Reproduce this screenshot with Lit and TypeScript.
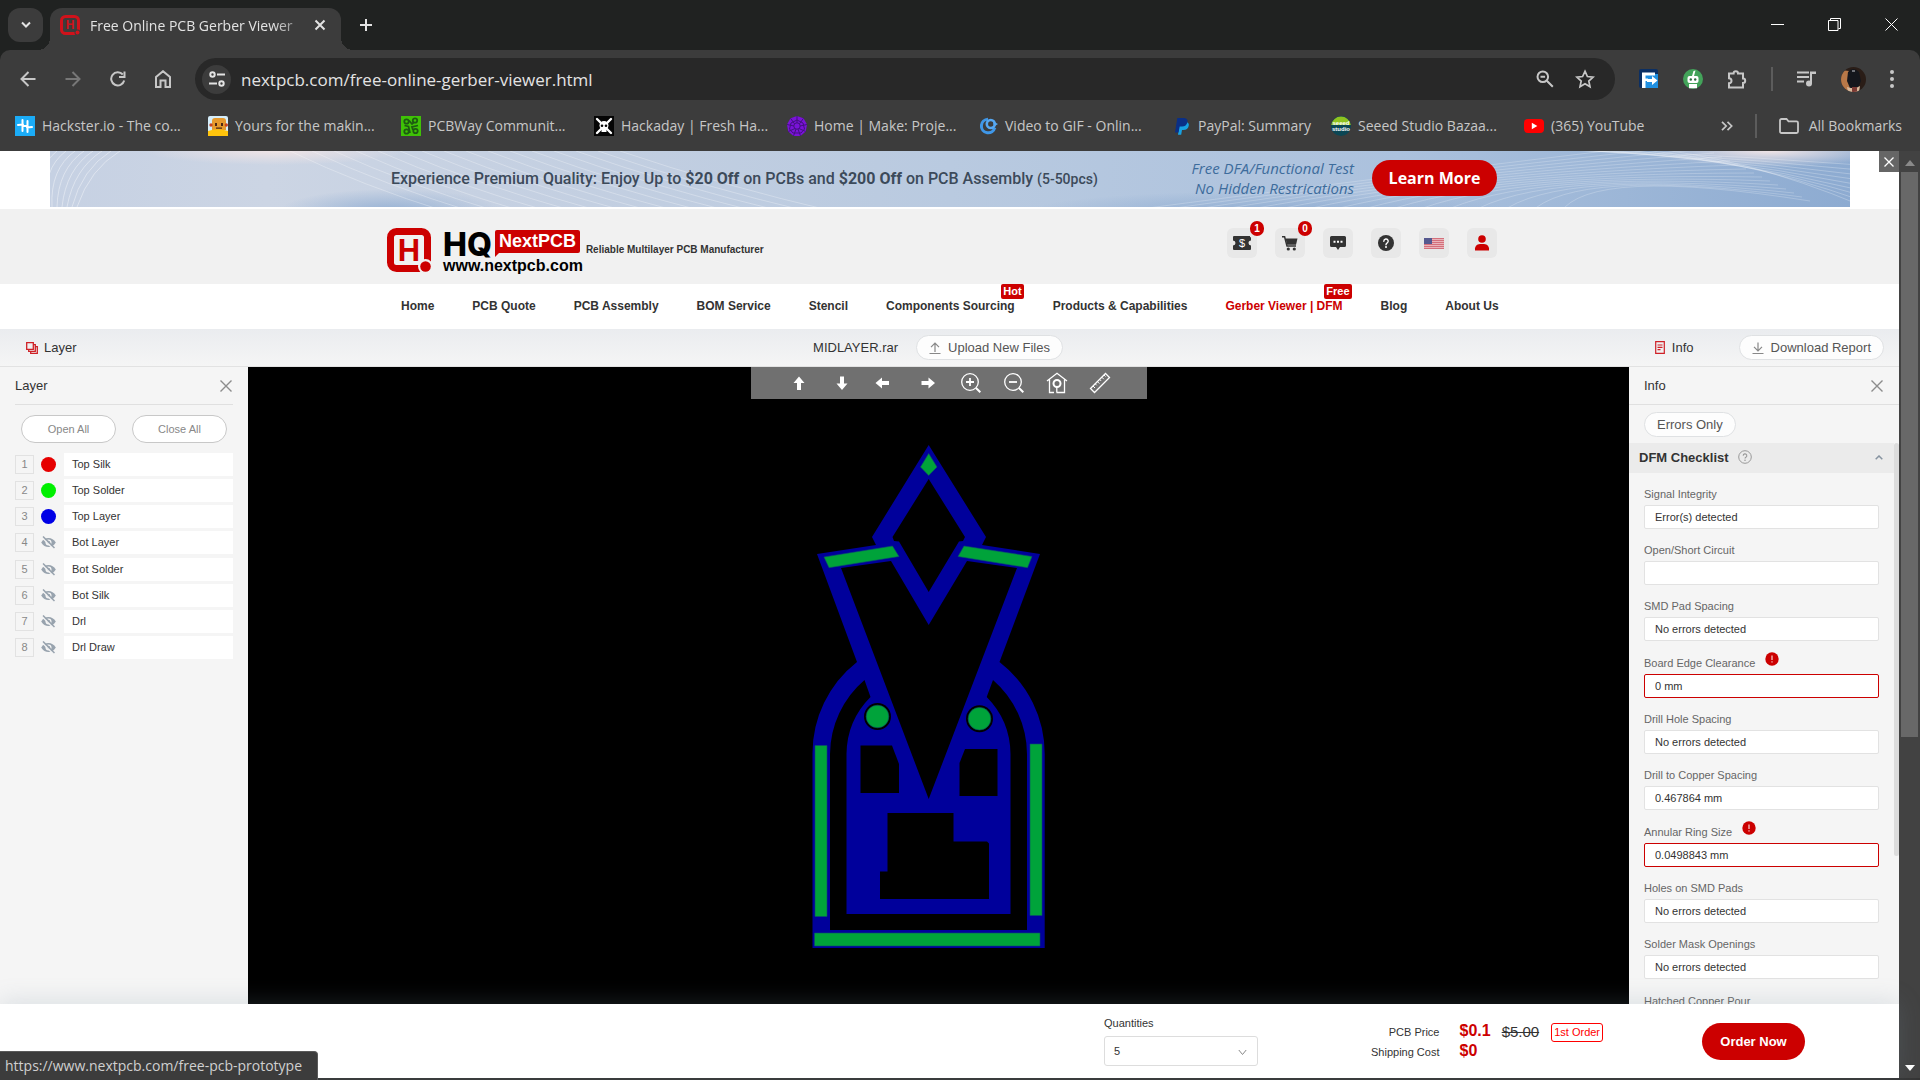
import { LitElement, html, css, svg, nothing, TemplateResult, SVGTemplateResult } from "lit";
import { customElement, state } from "lit/decorators.js";
import { classMap } from "lit/directives/class-map.js";
import { styleMap } from "lit/directives/style-map.js";

const icon = (w: number, h: number, vb: string, body: SVGTemplateResult): TemplateResult =>
  html`<svg class="icon" width=${w} height=${h} viewBox=${vb} aria-hidden="true">${body}</svg>`;

const line = (d: string, w = 2, color = "currentColor") =>
  svg`<path d=${d} fill="none" stroke=${color} stroke-width=${w} stroke-linecap="round" stroke-linejoin="round"></path>`;
const flat = (d: string, w = 2, color = "currentColor") =>
  svg`<path d=${d} fill="none" stroke=${color} stroke-width=${w}></path>`;
const fill = (d: string, color = "currentColor") => svg`<path d=${d} fill=${color}></path>`;

/* ---------- browser icons ---------- */
const icons = {
  chevron: icon(12, 8, "0 0 12 8", flat("M2 1.5 6 5.5 10 1.5", 2)),
  close: icon(12, 12, "0 0 12 12", flat("M1.5 1.5l9 9M10.500 1.500l-9 9", 2)),
  plus: icon(14, 14, "0 0 14 14", flat("M7 1v12M1 7h12", 2)),
  min: icon(13, 13, "0 0 13 13", fill("M0 6h13v1H0z")),
  max: icon(13, 13, "0 0 13 13", flat("M.5 2.500h9.500v10H.5zM2.500 2.500V.5h10v10h-2", 1)),
  winClose: icon(13, 13, "0 0 13 13", flat("M.5.5l12 12M12.500.5l-12 12", 1)),
  back: icon(16, 16, "0 0 16 16", flat("M15.500 8H1.500M8.500 1 1.500 8l7 7", 2)),
  fwd: icon(16, 16, "0 0 16 16", flat("M.5 8h14M7.500 1l7 7-7 7", 2)),
  reload: icon(16, 16, "0 0 16 16", svg`${flat("M14.200 9.500A6.600 6.600 0 1 1 12.800 3.500", 2)}${fill("M15.500.5v6.500H9V5h4.500V.5z")}`),
  home: icon(16, 18, "0 0 16 18", flat("M1 7 8 1.200 15 7v10h-4.500v-6.500h-5V17H1z", 2)),
  tune: icon(16, 16, "0 0 16 16", svg`${flat("M8 3.500h8M0 12.500h8", 2)}<circle cx="3.500" cy="3.500" r="2.200" fill="none" stroke="currentColor" stroke-width="2"></circle><circle cx="12.500" cy="12.500" r="2.200" fill="none" stroke="currentColor" stroke-width="2"></circle>`),
  zoom: icon(18, 18, "0 0 18 18", svg`<circle cx="6.800" cy="6.800" r="5.300" fill="none" stroke="currentColor" stroke-width="2"></circle>${flat("M10.800 10.800l6 6M4.500 6.800h4.600", 2)}`),
  star: icon(20, 20, "0 0 20 20", flat("M10 2.200l2.400 5.300 5.700.6-4.300 3.900 1.200 5.700-5-2.900-5 2.900 1.200-5.700L1.900 8.100l5.700-.6z", 1.7)),
  ext1: icon(20, 20, "0 0 20 20", svg`<rect width="19" height="19" rx="2" fill="#0b2f63"></rect><path d="M5 5h14v14H5z" fill="#1f8fe0"></path><path d="M3 3.500h13v3H6.500v3H9V12H6.500v7H3z" fill="#fff"></path><path d="M8 10h5V7l5.500 4.500L13 16v-3H8z" fill="#fff"></path>`),
  ext2: icon(20, 20, "0 0 20 20", svg`<circle cx="10" cy="10" r="10" fill="#43a35a"></circle><rect x="4.500" y="7" width="11" height="7" rx="2" fill="#fff"></rect><path d="M6 15h8v4.200H6zM9 7l1.500-5 2-.6L11 7z" fill="#fff"></path><circle cx="7.800" cy="10.500" r="1.200" fill="#2d6b40"></circle><circle cx="12.200" cy="10.500" r="1.200" fill="#2d6b40"></circle>`),
  puzzle: icon(20, 20, "0 0 20 20", svg`<path d="M2 4.500h4.600a2.200 2.200 0 1 1 4.400 0h5v5a2.200 2.200 0 1 1 0 4.400V18.500H2v-4.300a2.500 2.500 0 0 0 0-5z" fill="none" stroke="currentColor" stroke-width="2"></path>`),
  music: icon(20, 18, "0 0 20 18", svg`${flat("M0 2.500h12M0 7h12M0 11.500h7", 2)}<circle cx="12" cy="13.500" r="3" fill="currentColor"></circle>${fill("M13 1.500h6v2.500h-4v9.500h-2z")}`),
  dots: icon(4, 18, "0 0 4 18", svg`<circle cx="2" cy="2" r="2" fill="currentColor"></circle><circle cx="2" cy="9" r="2" fill="currentColor"></circle><circle cx="2" cy="16" r="2" fill="currentColor"></circle>`),
  more: icon(12, 10, "0 0 12 10", flat("M1 .8 5.200 5 1 9.200M6.500.8 10.700 5 6.500 9.200", 1.7)),
  folder: icon(20, 16, "0 0 20 16", svg`<path d="M1 2.500A1.500 1.500 0 0 1 2.500 1h5l2 2.300h8A1.500 1.500 0 0 1 19 4.800v8.700a1.500 1.500 0 0 1-1.500 1.500h-15A1.500 1.500 0 0 1 1 13.500z" fill="none" stroke="currentColor" stroke-width="1.800"></path>`),
  avatar: icon(25, 25, "0 0 25 25", svg`<defs><clipPath id="av"><circle cx="12.500" cy="12.500" r="12.500"></circle></clipPath></defs><g clip-path="url(#av)"><rect width="25" height="25" fill="#2a1d17"></rect><path d="M0 3l8 1 1 16-3 5H0z" fill="#b87848"></path><path d="M7 5q5-6 11 0l2 9-3 7H9l-3-7z" fill="#14161c"></path><path d="M6 20l4 1h5l4-2-1 6H7z" fill="#d9b99c"></path><path d="M11 20h5v5h-5z" fill="#7a3a34"></path><path d="M11 3h3v2h-3z" fill="#6f7178"></path></g>`),
};

/* ---------- bookmark favicons ---------- */
const fav = {
  hackster: icon(20, 20, "0 0 20 20", svg`<rect width="20" height="20" fill="#1bacf7"></rect>${line("M7.500 4v11M12.500 5v11M3 9l5-.4M12 11.500l5-.5M8 10h4.500", 2, "#fff")}`),
  yours: icon(20, 20, "0 0 20 20", svg`<rect width="20" height="20" rx="2" fill="#d5eefb"></rect><path d="M4 5q0-3 3-3h8q3 0 3 3v9H4z" fill="#e69a2e"></path><path d="M0 15q10-3.500 20 0v5H0z" fill="#ffc40c"></path><path d="M7 7h2v3H7zm6 0h2v3h-2zM8 11.500h6v1.200H8z" fill="#4c2814"></path><circle cx="3" cy="9" r="1.700" fill="#c74424"></circle><circle cx="18.300" cy="9" r="1.700" fill="#c74424"></circle>`),
  pcbway: icon(20, 20, "0 0 20 20", svg`<rect width="20" height="20" fill="#3fc206"></rect><g fill="none" stroke="#1d5a12" stroke-width="1.800"><circle cx="5.500" cy="5.500" r="2.200"></circle><circle cx="14" cy="4.500" r="2.200"></circle><circle cx="5.500" cy="15.500" r="2.200"></circle><circle cx="14.500" cy="15" r="2.200"></circle><path d="M8 4.500 11 8l1.500-1.500M3.500 9.500l4 1L9 17M12 14l-1-3 6-1.500"></path></g>`),
  hackaday: icon(20, 20, "0 0 20 20", svg`<rect width="20" height="20" fill="#050505"></rect>${line("M3 3l14 14M17 3 3 17", 2.4, "#fff")}<circle cx="10" cy="9.500" r="4.500" fill="#fff"></circle><path d="M7.500 12.500h5v3.500h-5z" fill="#fff"></path><circle cx="8" cy="9.800" r="1.300" fill="#050505"></circle><circle cx="12" cy="9.800" r="1.300" fill="#050505"></circle>`),
  make: icon(20, 20, "0 0 20 20", svg`<path d="M10 0l6.500 2.300L20 8.500l-1.300 7L13.500 20h-7L1.300 15.500 0 8.500l3.500-6.200z" fill="#7a12d8"></path><g fill="none" stroke="#431080" stroke-width="1"><circle cx="10" cy="10" r="3.200"></circle><path d="M10 0v6.800M3.500 2.300l4 5.500M16.500 2.300l-4 5.500M0 8.500l7 1.500M20 8.500 13 10M1.300 15.500 8 12.500M18.700 15.500 12 12.500M6.500 20l2.500-7M13.500 20 11 13M4 7l6-3 6 3 1.500 6-3.500 4H6l-3.500-4z"></path></g>`),
  gif: icon(18, 18, "0 0 18 18", svg`<path d="M8 2.200a6.800 6.800 0 1 0 6.800 8.500" fill="none" stroke="#3f97e8" stroke-width="3"></path><circle cx="10.800" cy="7" r="4" fill="none" stroke="#56a8f2" stroke-width="2.600"></circle><path d="M13 4.500 18 7l-4 2.500z" fill="#56a8f2"></path>`),
  paypal: icon(18, 18, "0 0 18 18", svg`<path d="M6.500 5h6.800q3.200.8 2.400 4-.9 4-5.200 4H9l-.8 4.800H5z" fill="#17a1e2"></path><path d="M4.300 1h6.900q4 .4 3.200 4.200-.9 4.200-5.400 4.200H6.700L5.500 15.500H2z" fill="#0a2f86"></path>`),
  seeed: icon(20, 20, "0 0 20 20", svg`<circle cx="10" cy="10" r="10" fill="#0b4654"></circle><path d="M.2 9a9.900 9.900 0 0 1 19.600 0z" fill="#8fc31f"></path><text x="10" y="9" font-size="6" font-weight="700" fill="#fff" text-anchor="middle" font-family="Liberation Sans, sans-serif">seeed</text><text x="10" y="14.500" font-size="6" font-weight="700" fill="#fff" text-anchor="middle" font-family="Liberation Sans, sans-serif">studio</text>`),
  youtube: icon(20, 18, "0 0 20 18", svg`<rect y="2" width="20" height="14" rx="4" fill="#f00"></rect><path d="M7.800 5.800v6.400L13.300 9z" fill="#fff"></path>`),
};

/* ---------- site icons ---------- */
const site = {
  coupon: icon(18, 14, "0 0 18 14", svg`<path d="M1 0h16v1q1 0 1 1v2.500a2.500 2.500 0 0 0 0 5V13q0 1-1 1H1q-1 0-1-1V9.500a2.500 2.500 0 0 0 0-5V1q0-1 1-1z" fill="#333"></path><text x="9" y="11" font-size="11" fill="#fff" text-anchor="middle" font-family="Liberation Sans, sans-serif">$</text>`),
  cart: icon(16, 15, "0 0 16 15", svg`<path d="M3.500 2.500H15.500L14 8.800H5.200z" fill="#333"></path>${flat("M0 .8h2.600L5 10h9", 1.5, "#333")}<circle cx="6.300" cy="13" r="1.600" fill="#333"></circle><circle cx="12.300" cy="13" r="1.600" fill="#333"></circle>`),
  chat: icon(16, 14, "0 0 16 14", svg`<path d="M1.500 0h13Q16 0 16 1.500v8q0 1.500-1.500 1.500H10l-2 3-2-3H1.500Q0 11 0 9.500v-8Q0 0 1.500 0z" fill="#333"></path><path d="M3.500 4.700h2v2h-2zm3.500 0h2v2H7zm3.500 0h2v2h-2z" fill="#fff"></path>`),
  help: icon(16, 16, "0 0 16 16", svg`<circle cx="8" cy="8" r="8" fill="#333"></circle>${line("M5.800 6.200a2.200 2.200 0 1 1 3.200 2q-1 .6-1 1.500", 1.4, "#fff")}<circle cx="8" cy="12" r="1" fill="#fff"></circle>`),
  flag: icon(20, 11, "0 0 20 11", svg`<rect width="20" height="11" fill="#eab4ba"></rect>${[0, 2, 4, 6, 8, 10].map((y) => svg`<rect y=${y} width="20" height="1" fill="#d4707b"></rect>`)}<rect width="8" height="6" fill="#56598f"></rect>`),
  user: icon(16, 16, "0 0 16 16", svg`<circle cx="8" cy="4" r="3.800" fill="#c00"></circle><path d="M1 15.500q-.5-6.500 5-6.500h4q5.500 0 5 6.500z" fill="#c00"></path>`),
  layers: icon(12, 12, "0 0 12 12", svg`${flat("M.7.7h6.600v6.600H.7zM2.700 7.300v2h6.600V2.700h-2M4.700 9.300v2h6.600V4.700h-2", 1.3, "#cf2026")}`),
  doc: icon(10, 13, "0 0 10 13", svg`${flat("M.7.7h8.600v11.600H.7zM2.500 4h5M2.500 6.300h5M2.500 8.600h3", 1.2, "#cf2026")}`),
  upload: icon(12, 12, "0 0 12 12", flat("M6 10V1.500M2 5.200 6 1.200l4 4M.5 11.500h11", 1.2, "#888")),
  download: icon(12, 12, "0 0 12 12", flat("M6 .5V8.500M2 4.800l4 4 4-4M.5 11.500h11", 1.2, "#888")),
  cross: icon(12, 12, "0 0 12 12", flat("M.5.5l11 11M11.500.5l-11 11", 1.4, "#8c8c8c")),
  eyeOff: icon(15, 13, "0 0 15 13", svg`<path d="M.2 6.500Q3 2 7.500 2t7.300 4.500Q12 11 7.500 11T.2 6.500z" fill="#98a3ae"></path><circle cx="7.500" cy="6.500" r="3" fill="#f5f5f5"></circle><circle cx="7.500" cy="6.500" r="1.700" fill="#98a3ae"></circle>${flat("M1 1.500 12.500 13", 1.4, "#f5f5f5")}${flat("M2 .5 13.500 12", 1.5, "#98a3ae")}`),
  question: icon(14, 14, "0 0 14 14", svg`<circle cx="7" cy="7" r="6.300" fill="none" stroke="#999" stroke-width="1"></circle>${flat("M5.200 5.700a1.800 1.800 0 1 1 2.700 1.500q-.9.5-.9 1.300", 1.1, "#999")}<circle cx="7" cy="10.300" r=".8" fill="#999"></circle>`),
  up: icon(8, 5, "0 0 8 5", flat("M.7 4.300 4 1l3.300 3.300", 1.5, "#8693a0")),
  down: icon(9, 7, "0 0 9 7", flat("M.8 1l3.700 4.500L8.200 1", 1, "#888")),
  error: icon(14, 14, "0 0 14 14", svg`<circle cx="7" cy="7" r="6.700" fill="#c00"></circle><rect x="6.500" y="3.500" width="1" height="4.500" fill="#fff"></rect><rect x="6.500" y="9.300" width="1" height="1.200" fill="#fff"></rect>`),
};

/* ---------- viewer toolbar ---------- */
const tools: [string, TemplateResult][] = [
  ["Move up", icon(20, 20, "0 0 20 20", fill("M10 3.500l5.500 6.500H12v7H8v-7H4.500z"))],
  ["Move down", icon(20, 20, "0 0 20 20", fill("M10 17l5.500-6.500H12v-7H8v7H4.500z"))],
  ["Move left", icon(20, 20, "0 0 20 20", fill("M.5 10 7 4.500V8h7v4H7v3.500z"))],
  ["Move right", icon(20, 20, "0 0 20 20", fill("M17 10l-6.500-5.500V8h-7v4h7v3.500z"))],
  ["Zoom in", icon(20, 20, "0 0 20 20", svg`<circle cx="9" cy="9" r="8.300" fill="none" stroke="currentColor" stroke-width="1.300"></circle>${flat("M5 9h8M9 5v8", 1.800)}${flat("M15 15l4.300 4.300", 2)}`)],
  ["Zoom out", icon(20, 20, "0 0 20 20", svg`<circle cx="9" cy="9" r="8.300" fill="none" stroke="currentColor" stroke-width="1.300"></circle>${flat("M5 9h8", 1.800)}${flat("M15 15l4.300 4.300", 2)}`)],
  ["Reset view", icon(22, 22, "0 0 22 22", svg`${flat("M1 9 11 1.300 21 9M3.500 7.500v13H8M10.500 20.500H18.500V7.500M10.800 15v5.500", 1.300)}<circle cx="11" cy="11.500" r="3.500" fill="none" stroke="currentColor" stroke-width="2"></circle>`)],
  ["Measure", icon(22, 22, "0 0 22 22", svg`${flat("M1.500 16.500 16.500 1.500l4 4L5.500 20.500z", 1.300)}${flat("M4 14l2 2M6.200 11.800l1.500 1.500M8.400 9.600l2 2M10.600 7.400l1.500 1.500M12.800 5.200l2 2M15 3l1.500 1.500", 1)}`)],
];

const bookmarks: { name: string; pic: TemplateResult; short?: boolean }[] = [
  { name: "Hackster.io - The co...", pic: fav.hackster },
  { name: "Yours for the makin...", pic: fav.yours },
  { name: "PCBWay Communit...", pic: fav.pcbway },
  { name: "Hackaday | Fresh Ha...", pic: fav.hackaday },
  { name: "Home | Make: Proje...", pic: fav.make },
  { name: "Video to GIF - Onlin...", pic: fav.gif },
  { name: "PayPal: Summary", pic: fav.paypal, short: true },
  { name: "Seeed Studio Bazaa...", pic: fav.seeed },
  { name: "(365) YouTube", pic: fav.youtube },
];

const menu: { name: string; tag?: string; active?: boolean }[] = [
  { name: "Home" }, { name: "PCB Quote" }, { name: "PCB Assembly" }, { name: "BOM Service" }, { name: "Stencil" },
  { name: "Components Sourcing", tag: "Hot" }, { name: "Products & Capabilities" },
  { name: "Gerber Viewer | DFM", tag: "Free", active: true }, { name: "Blog" }, { name: "About Us" },
];

const actions: { name: string; pic: TemplateResult; count?: number }[] = [
  { name: "Coupons", pic: site.coupon, count: 1 },
  { name: "Cart", pic: site.cart, count: 0 },
  { name: "Messages", pic: site.chat },
  { name: "Help", pic: site.help },
  { name: "Country", pic: site.flag },
  { name: "Account", pic: site.user },
];

const layers: { name: string; color?: string }[] = [
  { name: "Top Silk", color: "#e60000" },
  { name: "Top Solder", color: "#00f000" },
  { name: "Top Layer", color: "#0000e6" },
  { name: "Bot Layer" }, { name: "Bot Solder" }, { name: "Bot Silk" }, { name: "Drl" }, { name: "Drl Draw" },
];

const checks: { name: string; value: string; bad?: boolean }[] = [
  { name: "Signal Integrity", value: "Error(s) detected" },
  { name: "Open/Short Circuit", value: "" },
  { name: "SMD Pad Spacing", value: "No errors detected" },
  { name: "Board Edge Clearance", value: "0 mm", bad: true },
  { name: "Drill Hole Spacing", value: "No errors detected" },
  { name: "Drill to Copper Spacing", value: "0.467864 mm" },
  { name: "Annular Ring Size", value: "0.0498843 mm", bad: true },
  { name: "Holes on SMD Pads", value: "No errors detected" },
  { name: "Solder Mask Openings", value: "No errors detected" },
  { name: "Hatched Copper Pour", value: "No errors detected" },
];

const range = (n: number) => Array.from({ length: n }, (_, i) => i);

/* Soft ribbons of thin lines behind the promotion text. */
const bannerArt = html`<svg class="art" viewBox="0 0 1800 56" preserveAspectRatio="none" aria-hidden="true">
  <defs>
    <linearGradient id="sky"><stop offset="0" stop-color="#c6d1e3"></stop><stop offset=".12" stop-color="#ccd5e4"></stop><stop offset=".3" stop-color="#c3cfe1"></stop><stop offset=".5" stop-color="#b9cae0"></stop><stop offset=".75" stop-color="#abc1dd"></stop><stop offset="1" stop-color="#8dabd1"></stop></linearGradient>
    <radialGradient id="glow"><stop offset="0" stop-color="#efe4e6"></stop><stop offset="1" stop-color="#efe4e6" stop-opacity="0"></stop></radialGradient>
    <radialGradient id="deep"><stop offset="0" stop-color="#8aa9d0" stop-opacity=".8"></stop><stop offset="1" stop-color="#8aa9d0" stop-opacity="0"></stop></radialGradient>
  </defs>
  <rect width="1800" height="56" fill="url(#sky)"></rect>
  <ellipse cx="225" cy="0" rx="130" ry="14" fill="url(#glow)"></ellipse>
  <ellipse cx="1720" cy="0" rx="120" ry="16" fill="url(#glow)"></ellipse>
  <ellipse cx="340" cy="60" rx="110" ry="22" fill="url(#deep)"></ellipse>
  <ellipse cx="1220" cy="60" rx="240" ry="20" fill="url(#deep)"></ellipse>
  <g fill="none" stroke="#fff" stroke-width="1">
    ${range(9).map((i) => svg`<path opacity=".4" d=${`M${70 - i * 9} 0Q${40 - i * 8} 18 ${27 - i * 5} 56`}></path>`)}
    ${range(16).map((i) => svg`<path opacity=".28" d=${`M${240 + i * 22} 0Q${310 + i * 24} 34 ${400 + i * 26} 62`}></path>`)}
    ${range(16).map((i) => svg`<path opacity=".22" d=${`M${1060 + i * 30} 62Q${1300 + i * 16} ${30 - i} ${1640 + i * 8} ${-10 + i * 4}`}></path>`)}
    ${range(9).map((i) => svg`<path opacity=".25" d=${`M${1380 + i * 26} -4Q${1600 + i * 12} ${-2 + i} 1810 ${14 + i * 5}`}></path>`)}
  </g>
</svg>`;

const board = html`<svg class="board" viewBox="248 367 1381 637" role="img" aria-label="Board preview">
  <g fill="#00009b">
    <path d="M928.700 445 986 537 982 545 1040 554 999.500 662A116 116 0 0 1 1044.700 754V948H812.500V754A116 116 0 0 1 857 662L817 554 876 545 872 537Z"></path>
  </g>
  <g fill="#000">
    <path d="M928.700 479 965 537 963 541 959 541.500 928.700 592 899 541.500 894 541 892.500 537Z"></path>
    <path d="M841 568 891 561 928.700 625 967 561 1017 568 928.700 799Z"></path>
    <path d="M864.500 680 870.500 697A82 82 0 0 0 846.500 754V914H1010.500V754A82 82 0 0 0 986.700 697L993 680A98.500 98.500 0 0 1 1027 754V930H830V754A98.500 98.500 0 0 1 864.500 680Z"></path>
    <path d="M860.500 745.500H892L899 764V793H860.500Z"></path>
    <path d="M965 749H997.500V796H959.500V763Z"></path>
    <path d="M887.500 813H953.500V841.500H987L989 843.500V899H880V871.500H887.500Z"></path>
    <circle cx="877.500" cy="716.500" r="13.500"></circle>
    <circle cx="979.500" cy="718.700" r="13.500"></circle>
  </g>
  <g fill="#00a33a" stroke="#0a4f6c" stroke-width=".6">
    <path d="M928.700 453.500 937 467 928.700 475.500 920.500 467Z"></path>
    <path d="M824 557 892.500 546 899 556.500 829 567.700Z"></path>
    <path d="M958 556.500 964 546 1032 556.500 1027.500 567.700Z"></path>
    <path d="M815 745.500H827V916.500H815Z"></path>
    <path d="M1030 744H1042V915.500H1030Z"></path>
    <path d="M814.500 933H1040V946H814.500Z"></path>
    <circle cx="877.500" cy="716.500" r="11.300"></circle>
    <circle cx="979.500" cy="718.700" r="11.300"></circle>
  </g>
</svg>`;

@customElement("app-root")
export class AppRoot extends LitElement {
  @state() private quantity = "5";

  static styles = css`
    :host { display: flex; flex-direction: column; height: 100vh; overflow: hidden; position: relative; font-family: "Liberation Sans", Arial, sans-serif; font-size: 13px; color: #333; background: #fff; }
    * { box-sizing: border-box; }
    button, input, select { font: inherit; color: inherit; margin: 0; }
    button { border: 0; background: none; padding: 0; cursor: pointer; display: inline-flex; align-items: center; justify-content: center; }
    a { color: inherit; text-decoration: none; }
    ul { list-style: none; margin: 0; padding: 0; }
    .icon { display: block; flex: none; }

    /* browser frame */
    .chrome { flex: none; background: #202221; color: #e3e3e3; font-family: "Open Sans", "Noto Sans", sans-serif; }
    .strip { display: flex; align-items: flex-end; height: 50px; padding-left: 8px; }
    .search-tabs { width: 35px; height: 34px; border-radius: 12px; background: #3c3c3c; margin-bottom: 8px; }
    .tab { position: relative; display: flex; align-items: center; width: 291px; height: 42px; margin-left: 7px; padding: 0 15px 8px 10px; border-radius: 12px 12px 0 0; background: #3c3c3c; }
    .tab::before, .tab::after { content: ""; position: absolute; bottom: 0; width: 12px; height: 12px; }
    .tab::before { right: 100%; background: radial-gradient(circle at 0 0, transparent 12px, #3c3c3c 12px); }
    .tab::after { left: 100%; background: radial-gradient(circle at 100% 0, transparent 12px, #3c3c3c 12px); }
    .tab-title { flex: 1; margin: 0 9px 0 10px; font-size: 14px; white-space: nowrap; -webkit-mask-image: linear-gradient(90deg, #000 85%, transparent 105%); mask-image: linear-gradient(90deg, #000 85%, transparent 105%); }
    .new-tab { width: 50px; height: 50px; }
    .window { display: flex; margin-left: auto; height: 50px; color: #fff; }
    .window button { width: 57px; height: 48px; }
    .bar { display: flex; align-items: center; height: 60px; padding: 0 26px 2px 20px; background: #3c3c3c; border-radius: 10px 10px 0 0; color: #c7c7c7; }
    .nav-buttons { display: flex; gap: 29px; margin-right: 24px; }
    .nav-buttons button { width: 16px; }
    .dim { color: #777; }
    .omni { flex: 1; display: flex; align-items: center; height: 42px; padding: 0 20px 0 7px; border-radius: 21px; background: #282828; margin-right: 24px; }
    .tune { width: 29px; height: 29px; border-radius: 50%; background: #3c3c3c; color: #e3e3e3; }
    .url { flex: 1; min-width: 0; margin-left: 10px; border: 0; padding: 0; background: none; font-size: 17px; color: #e3e3e3; outline: 0; }
    .omni-tools { display: flex; gap: 21px; }
    .exts { display: flex; align-items: center; gap: 24px; }
    .rule { width: 2px; height: 24px; background: #5c5c5c; }
    .marks { display: flex; align-items: center; height: 41px; padding: 0 18px 10px 15px; background: #3c3c3c; color: #c7c7c7; font-size: 14px; }
    .mark { flex: none; display: flex; align-items: center; gap: 7px; width: 193px; white-space: nowrap; }
    .mark.short { width: 158px; }
    .marks-end { display: flex; align-items: center; gap: 22px; margin-left: auto; }
    .marks-end a { display: flex; align-items: center; gap: 10px; white-space: nowrap; }

    /* page */
    .view { flex: 1; min-height: 0; display: flex; border-bottom: 2px solid #353535; }
    .page { flex: 1; min-width: 0; display: flex; flex-direction: column; }
    .scroll { flex: none; display: flex; flex-direction: column; align-items: center; width: 21px; background: #424242; color: #8a8a8a; padding: 9px 0 7px; }
    .thumb { width: 17px; height: 62%; margin-top: 6px; background: #686868; }
    .scroll-down { margin-top: auto; color: #fff; }

    .promo { display: flex; height: 58px; padding: 0 0 2px 50px; position: relative; }
    .promo-in { flex: 1; display: flex; align-items: center; position: relative; margin-right: 49px; padding-bottom: 2px; overflow: hidden; font-family: Roboto, sans-serif; color: #3c4a5a; }
    .art { position: absolute; inset: 0; width: 100%; height: 100%; }
    .promo-text { position: relative; margin-left: 341px; width: 800px; font-size: 16px; font-weight: 500; white-space: nowrap; }
    .promo-text small { font-size: 14px; }
    .promo-side { position: relative; width: 163px; font-family: "Open Sans", sans-serif; font-size: 15px; font-style: italic; line-height: 20px; text-align: right; color: #3d6c9c; white-space: nowrap; }
    .promo-btn { position: relative; width: 125px; height: 36px; margin-left: 18px; border-radius: 18px; background: #c00; color: #fff; font: 700 16px "Open Sans", sans-serif; white-space: nowrap; }
    .promo-close { align-self: flex-start; width: 20px; height: 21px; background: #666; color: #fff; position: absolute; right: 0; top: 0; }

    .head { background: #f1f1f1; }
    .wrap { max-width: 1125px; margin: 0 auto; display: flex; }
    .head .wrap { height: 75px; padding: 0 15px 0 0; }
    .logo { display: flex; align-items: flex-start; padding-top: 19px; color: #000; }
    .logo-words { display: flex; flex-direction: column; margin-left: 12px; }
    .logo-top { display: flex; align-items: flex-start; height: 31px; padding-top: 2px; }
    .hq { font: 800 32px/29px Inter, sans-serif; width: 52px; }
    .next { position: relative; height: 23px; padding: 0 4px; background: #c00; border-radius: 2px; color: #fff; font: 700 18px/23px "Liberation Sans", sans-serif; }
    .next::after { content: ""; position: absolute; left: 0; top: 20px; border-top: 7px solid #c00; border-right: 7px solid transparent; }
    .www { font: 700 16px/14px "Liberation Sans", sans-serif; }
    .slogan { font-size: 10px; font-weight: 700; margin: 16px 0 0 3px; line-height: 12px; color: #333; }
    .acts { display: flex; gap: 18px; margin: 19px 0 0 auto; }
    .act { position: relative; width: 30px; height: 30px; border-radius: 6px; background: #e8e8e8; }
    .count { position: absolute; right: -7px; top: -7px; width: 14px; height: 15px; border-radius: 7px; background: #c00; color: #fff; font-size: 10px; line-height: 15px; font-weight: 700; text-align: center; }
    .menu .wrap { gap: 38px; height: 45px; align-items: center; padding: 0 14px 2px; font-size: 12px; font-weight: 700; white-space: nowrap; }
    .menu a { position: relative; }
    .menu .on { color: #c00; }
    .tag { position: absolute; right: -9px; top: -15px; padding: 0 2px; border-radius: 2px; background: #c00; color: #fff; font-size: 11px; line-height: 15px; }

    .sub { display: flex; align-items: center; height: 38px; padding: 0 15px 0 26px; border-bottom: 1px solid #e2e2e2; background: linear-gradient(#eaecef, #f5f5f5); color: #333; }
    .sub > div { display: flex; align-items: center; }
    .sub-left, .sub-right { flex: 1; }
    .with-icon { display: flex; align-items: center; gap: 6px; }
    .sub-right .with-icon { gap: 7px; }
    .sub .sub-mid { gap: 18px; margin-right: 34px; }
    .sub-right { justify-content: flex-end; gap: 45px; }
    .pill { height: 25px; border: 1px solid #dfe1e3; border-radius: 13px; background: #fdfdfd; color: #555; padding: 0 12px; gap: 7px; white-space: nowrap; }

    .work { flex: 1; min-height: 0; display: flex; background: #000; position: relative; }
    .panel { flex: none; background: #f5f5f5; overflow: hidden; }
    .left { width: 248px; padding: 0 15px; }
    .right { width: 270px; }
    .panel-head { display: flex; align-items: center; justify-content: space-between; height: 38px; padding-right: 1px; border-bottom: 1px solid #e0e0e0; }
    .right .panel-head { padding: 0 16px 0 15px; }
    .both { display: flex; justify-content: space-between; padding: 10px 6px; }
    .round { width: 95px; height: 28px; border: 1px solid #c8c8c8; border-radius: 14px; background: #fff; color: #888; font-size: 11px; }
    .layers li { display: flex; align-items: center; height: 23px; margin-bottom: 3px; font-size: 11px; }
    .layers li:nth-child(4n) { margin-bottom: 4px; }
    .num { width: 19px; height: 19px; border: 1px solid #e2e2e2; line-height: 17px; text-align: center; color: #888; }
    .eye { width: 15px; height: 15px; margin: 0 8px 0 7px; border-radius: 50%; }
    .lname { flex: 1; background: #fff; padding-left: 8px; line-height: 23px; }
    .canvas { flex: 1; min-width: 0; position: relative; }
    .board { display: block; width: 100%; height: 100%; }
    .tools { position: absolute; top: 0; left: 503px; display: flex; width: 396px; height: 32px; padding: 0 0 0 26px; background: #707070; color: #fff; }
    .tools button { width: 43px; height: 31px; }

    .errors { padding: 7px 15px 6px; }
    .group { display: flex; align-items: center; height: 30px; padding: 0 11px 2px 10px; background: #ebebeb; font-weight: 700; }
    .group .icon:first-of-type { margin: 0 auto 0 9px; }
    .checks { padding: 13px 15px 0; font-size: 11px; }
    .checks li { height: 43px; margin-bottom: 13px; }
    .checks li:nth-child(3n) { margin-bottom: 14px; }
    .checks label { display: flex; gap: 10px; height: 19px; line-height: 16px; color: #666; }
    .checks label .icon { margin-top: -3px; }
    .field { display: block; width: 100%; height: 24px; padding: 0 10px; border: 1px solid #e2e2e2; border-radius: 2px; background: #fff; color: #333; outline: 0; }
    .field.bad { border-color: #c00; }
    .body { display: grid; grid-template-columns: 1fr 5px; }
    .inner-thumb { height: 413px; border-radius: 3px; background: #dcdcdc; }

    .foot { flex: none; display: flex; height: 74px; padding: 13px 94px 0 0; justify-content: flex-end; background: #fff; box-shadow: 0 -2px 24px rgba(120, 140, 160, .22); position: relative; font-size: 11px; }
    .qty label { display: block; line-height: 13px; margin-bottom: 6px; }
    .pick { position: relative; width: 154px; }
    .pick select { appearance: none; width: 100%; height: 30px; border: 1px solid #ddd; border-radius: 3px; background: #fff; padding: 0 9px; }
    .pick .icon { position: absolute; right: 11px; top: 13px; pointer-events: none; }
    .cost { display: grid; grid-template-columns: auto auto; grid-auto-rows: 20px; column-gap: 20px; margin: 4px 0 0 113px; width: 236px; justify-content: start; align-items: center; }
    .cost dt { text-align: right; padding-top: 2px; }
    .cost dd { display: flex; align-items: center; margin: 0; }
    .cost b { font-size: 16px; color: #c00; }
    .cost s { font-size: 15px; margin: 0 12px 0 11px; }
    .first { border: 1px solid red; border-radius: 3px; color: red; padding: 0 2px; line-height: 17px; margin-top: 2px; white-space: nowrap; }
    .order { width: 103px; height: 37px; margin: 6px 0 0 95px; border-radius: 19px; background: #c00; color: #fff; font-size: 13px; font-weight: 700; }

    .status { position: absolute; left: 0; bottom: 0; height: 29px; padding: 0 15px 0 5px; border: 1px solid #5a5a5a; border-width: 1px 1px 0 0; border-radius: 0 4px 0 0; background: #3c3c3c; color: #d0d0d0; font: 14px/27px "Open Sans", sans-serif; }
  `;

  private browser() {
    return html`<header class="chrome">
      <div class="strip">
        <button class="search-tabs" aria-label="Search tabs">${icons.chevron}</button>
        <div class="tab">
          ${icon(20, 20, "0 0 20 20", svg`<rect x="1.500" y="1.500" width="17" height="17" rx="4" fill="none" stroke="#d0121b" stroke-width="3"></rect><text x="10" y="14" font-size="12" font-weight="700" fill="#d0121b" text-anchor="middle" font-family="Liberation Sans, sans-serif">H</text><circle cx="17.500" cy="17.500" r="3" fill="#3c3c3c"></circle><circle cx="17.500" cy="17.500" r="2" fill="#d0121b"></circle>`)}
          <span class="tab-title">Free Online PCB Gerber Viewer</span>
          <button aria-label="Close tab">${icons.close}</button>
        </div>
        <button class="new-tab" aria-label="New tab">${icons.plus}</button>
        <div class="window">
          <button aria-label="Minimize">${icons.min}</button>
          <button aria-label="Restore">${icons.max}</button>
          <button aria-label="Close">${icons.winClose}</button>
        </div>
      </div>
      <div class="bar">
        <div class="nav-buttons">
          <button aria-label="Back">${icons.back}</button>
          <button class="dim" aria-label="Forward">${icons.fwd}</button>
          <button aria-label="Reload">${icons.reload}</button>
          <button aria-label="Home">${icons.home}</button>
        </div>
        <div class="omni">
          <button class="tune" aria-label="Site information">${icons.tune}</button>
          <input class="url" aria-label="Address" value="nextpcb.com/free-online-gerber-viewer.html" />
          <div class="omni-tools">
            <button aria-label="Zoom">${icons.zoom}</button>
            <button aria-label="Bookmark">${icons.star}</button>
          </div>
        </div>
        <div class="exts">
          <button aria-label="Extension">${icons.ext1}</button>
          <button aria-label="Assistant">${icons.ext2}</button>
          <button aria-label="Extensions">${icons.puzzle}</button>
          <span class="rule"></span>
          <button aria-label="Media">${icons.music}</button>
          <button aria-label="Profile">${icons.avatar}</button>
          <button aria-label="Menu">${icons.dots}</button>
        </div>
      </div>
      <nav class="marks" aria-label="Bookmarks">
        ${bookmarks.map((b) => html`<a class=${classMap({ mark: true, short: !!b.short })} href="#">${b.pic}<span>${b.name}</span></a>`)}
        <div class="marks-end">
          <button aria-label="More bookmarks">${icons.more}</button>
          <span class="rule"></span>
          <a href="#">${icons.folder}<span>All Bookmarks</span></a>
        </div>
      </nav>
    </header>`;
  }

  private siteHead() {
    return html`<div class="promo">
        <div class="promo-in">
          ${bannerArt}
          <div class="promo-text">Experience Premium Quality: Enjoy Up to <b>$20 Off</b> on PCBs and <b>$200 Off</b> on PCB Assembly <small>(5-50pcs)</small></div>
          <div class="promo-side">Free DFA/Functional Test<br />No Hidden Restrications</div>
          <button class="promo-btn">Learn More</button>
        </div>
        <button class="promo-close" aria-label="Close banner">${icon(10, 10, "0 0 10 10", flat("M.5.5l9 9M9.500.5l-9 9", 1.3))}</button>
      </div>
      <div class="head">
        <div class="wrap">
          <a class="logo" href="#">
            ${icon(44, 44, "0 0 44 44", svg`<rect x="3.500" y="3.500" width="37" height="37" rx="6" fill="#f1f1f1" stroke="#c00" stroke-width="7"></rect><text x="22" y="32.500" font-size="31" font-weight="700" fill="#c00" text-anchor="middle" font-family="Liberation Sans, sans-serif">H</text><circle cx="38.500" cy="38.500" r="7.500" fill="#f1f1f1"></circle><circle cx="38.500" cy="38.500" r="5.300" fill="#c00"></circle>`)}
            <span class="logo-words">
              <span class="logo-top"><span class="hq">HQ</span><span class="next">NextPCB</span></span>
              <span class="www">www.nextpcb.com</span>
            </span>
            <span class="slogan">Reliable Multilayer PCB Manufacturer</span>
          </a>
          <div class="acts">
            ${actions.map((a) => html`<button class="act" aria-label=${a.name}>${a.pic}${a.count === undefined ? nothing : html`<span class="count">${a.count}</span>`}</button>`)}
          </div>
        </div>
      </div>
      <nav class="menu"><div class="wrap">
        ${menu.map((m) => html`<a class=${m.active ? "on" : ""} href="#">${m.name}${m.tag ? html`<span class="tag">${m.tag}</span>` : nothing}</a>`)}
      </div></nav>`;
  }

  private workspace() {
    return html`<div class="sub">
        <div class="sub-left"><span class="with-icon">${site.layers} Layer</span></div>
        <div class="sub-mid"><span>MIDLAYER.rar</span><button class="pill">${site.upload} Upload New Files</button></div>
        <div class="sub-right"><span class="with-icon">${site.doc} Info</span><button class="pill">${site.download} Download Report</button></div>
      </div>
      <main class="work">
        <section class="panel left">
          <div class="panel-head"><span>Layer</span><button aria-label="Close layers">${site.cross}</button></div>
          <div class="both"><button class="round">Open All</button><button class="round">Close All</button></div>
          <ul class="layers">
            ${layers.map((l, i) => html`<li>
              <span class="num">${i + 1}</span>
              <button class="eye" aria-label=${`Toggle ${l.name}`} style=${styleMap(l.color ? { background: l.color } : {})}>${l.color ? nothing : site.eyeOff}</button>
              <span class="lname">${l.name}</span>
            </li>`)}
          </ul>
        </section>
        <section class="canvas">
          ${board}
          <div class="tools" role="toolbar">${tools.map(([name, pic]) => html`<button aria-label=${name}>${pic}</button>`)}</div>
        </section>
        <section class="panel right">
          <div class="panel-head"><span>Info</span><button aria-label="Close info">${site.cross}</button></div>
          <div class="errors"><button class="pill">Errors Only</button></div>
          <div class="body">
            <div>
              <div class="group">DFM Checklist ${site.question}${site.up}</div>
              <ul class="checks">
                ${checks.map((c, i) => html`<li>
                  <label for=${`check-${i}`}>${c.name}${c.bad ? site.error : nothing}</label>
                  <input id=${`check-${i}`} class=${classMap({ field: true, bad: !!c.bad })} readonly .value=${c.value} />
                </li>`)}
              </ul>
            </div>
            <div class="inner-thumb"></div>
          </div>
        </section>
      </main>
      <footer class="foot">
        <div class="qty">
          <label for="qty">Quantities</label>
          <div class="pick">
            <select id="qty" @change=${(e: Event) => (this.quantity = (e.target as HTMLSelectElement).value)}>
              ${["5", "10", "20", "50"].map((q) => html`<option ?selected=${q === this.quantity}>${q}</option>`)}
            </select>
            ${site.down}
          </div>
        </div>
        <dl class="cost">
          <dt>PCB Price</dt><dd><b>$0.1</b><s>$5.00</s><span class="first">1st Order</span></dd>
          <dt>Shipping Cost</dt><dd><b>$0</b></dd>
        </dl>
        <button class="order">Order Now</button>
      </footer>`;
  }

  render() {
    return html`${this.browser()}
      <div class="view">
        <div class="page">${this.siteHead()}${this.workspace()}</div>
        <div class="scroll">
          ${icon(10, 6, "0 0 10 6", fill("M5 0l5 6H0z"))}
          <div class="thumb"></div>
          <span class="scroll-down">${icon(10, 6, "0 0 10 6", fill("M0 0h10L5 6z"))}</span>
        </div>
      </div>
      <div class="status">https://www.nextpcb.com/free-pcb-prototype</div>`;
  }
}
